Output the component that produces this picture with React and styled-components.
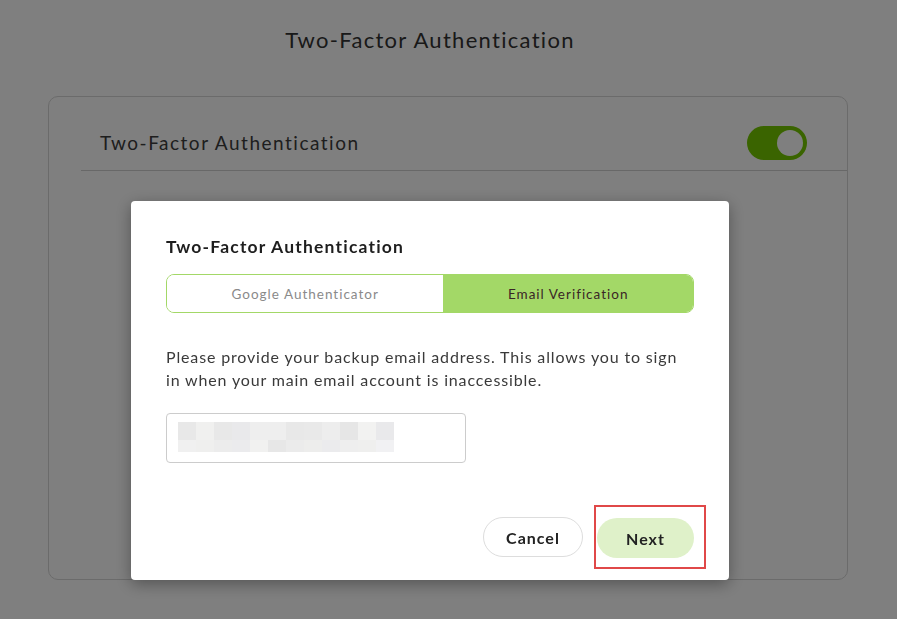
import styled, { createGlobalStyle } from "styled-components";

const GlobalStyle = createGlobalStyle`
  html, body {
    margin: 0;
    padding: 0;
    background: #ffffff;
    font-family: Lato, "Noto Sans", sans-serif;
    color: #333333;
  }
  * { box-sizing: border-box; }
`;

const pixels = [
  ["#e8e8e8", "#f0f0ef", "#e8e8e8", "#e9e9eb", "#eeeeee", "#eeeeee", "#e8e8e8", "#e9e9e9", "#ededed", "#e6e6e6", "#f2f2f1", "#e9e9eb"],
  ["#f0f0f0", "#efefee", "#ececec", "#ebebed", "#f1f1f0", "#e7e7e7", "#ebebeb", "#ededec", "#ebebed", "#eeeeee", "#efefee", "#f1f1f3"],
];

const App = () => {
  return (
    <>
      <GlobalStyle />
      <Page>
        <PageTitle>Two-Factor Authentication</PageTitle>
        <Card>
          <CardRow>
            <RowLabel>Two-Factor Authentication</RowLabel>
            <Toggle>
              <Knob />
            </Toggle>
          </CardRow>
        </Card>
      </Page>
      <Overlay>
        <Modal>
          <ModalTitle>Two-Factor Authentication</ModalTitle>
          <Tabs>
            <Tab>Google Authenticator</Tab>
            <Tab $active>Email Verification</Tab>
          </Tabs>
          <Description>
            Please provide your backup email address. This allows you to sign
            in when your main email account is inaccessible.
          </Description>
          <EmailField>
            <Redacted>
              {pixels.map((row, r) =>
                row.map((c, i) => <Pixel key={r + "-" + i} $shade={c} />)
              )}
            </Redacted>
          </EmailField>
          <Actions>
            <CancelButton>Cancel</CancelButton>
            <Highlight>
              <NextButton>Next</NextButton>
            </Highlight>
          </Actions>
        </Modal>
      </Overlay>
    </>
  );
};
export default App;

const Page = styled.div`
  width: 897px;
  height: 619px;
  padding: 28px 49px 0 48px;
  display: flex;
  flex-direction: column;
  align-items: stretch;
`;
const PageTitle = styled.h1`
  margin: 0 0 44px 0;
  padding-right: 36px;
  text-align: center;
  font-size: 22px;
  line-height: 24px;
  letter-spacing: 1.3px;
  font-weight: 400;
  color: #333333;
`;
const Card = styled.div`
  height: 484px;
  border: 1px solid #d6d6d6;
  border-radius: 10px;
  padding: 26px 0 0 32px;
`;
const CardRow = styled.div`
  display: flex;
  align-items: center;
  justify-content: space-between;
  padding: 2px 40px 10px 19px;
  border-bottom: 1px solid #d0d0d0;
  height: 48px;
`;
const RowLabel = styled.span`
  font-size: 19px;
  letter-spacing: 1.5px;
  color: #3c3c3c;
`;
const Toggle = styled.div`
  width: 60px;
  height: 34px;
  border-radius: 17px;
  background: #74c800;
  display: flex;
  align-items: center;
  justify-content: flex-end;
  padding-right: 4px;
`;
const Knob = styled.div`
  width: 26px;
  height: 26px;
  border-radius: 50%;
  background: #ffffff;
`;
const Overlay = styled.div`
  position: fixed;
  inset: 0;
  background: rgba(0, 0, 0, 0.5);
  display: flex;
  align-items: flex-start;
  padding: 201px 0 0 131px;
`;
const Modal = styled.div`
  width: 598px;
  height: 379px;
  background: #ffffff;
  border-radius: 4px;
  box-shadow: 0 4px 16px rgba(0, 0, 0, 0.35);
  padding: 35px 35px 11px 35px;
  display: flex;
  flex-direction: column;
`;
const ModalTitle = styled.h2`
  margin: 0;
  font-size: 17.5px;
  line-height: 22px;
  letter-spacing: 1.2px;
  font-weight: 700;
  color: #1e1e1e;
`;
const Tabs = styled.div`
  margin-top: 16px;
  display: flex;
  height: 39px;
  border: 1px solid #a3d867;
  border-radius: 8px;
  overflow: hidden;
`;
const Tab = styled.div`
  flex: 1 1 auto;
  padding: 0 20px;
  display: flex;
  align-items: center;
  justify-content: center;
  font-size: 13.5px;
  letter-spacing: 1px;
  background: ${(p) => (p.$active ? "#a3d867" : "#ffffff")};
  color: ${(p) => (p.$active ? "#3a2626" : "#8a8a8a")};
`;
const Description = styled.p`
  margin: 32px 0 0 0;
  padding-right: 6px;
  font-size: 16px;
  line-height: 23px;
  letter-spacing: 0.85px;
  color: #3a3a3a;
`;
const EmailField = styled.div`
  margin-top: 22px;
  width: 300px;
  height: 50px;
  border: 1px solid #cccccc;
  border-radius: 4px;
  padding: 8px 11px;
`;
const Redacted = styled.div`
  display: grid;
  grid-template-columns: repeat(12, 18px);
  grid-template-rows: 18px 12px;
`;
const Pixel = styled.span`
  background: ${(p) => p.$shade};
`;
const Actions = styled.div`
  margin-top: auto;
  display: flex;
  justify-content: flex-end;
  align-items: center;
  gap: 11px;
`;
const ButtonBase = styled.button`
  height: 40px;
  border-radius: 20px;
  font-family: Lato, "Noto Sans", sans-serif;
  font-size: 16px;
  letter-spacing: 1px;
  font-weight: 700;
  color: #222222;
  cursor: pointer;
`;
const CancelButton = styled(ButtonBase)`
  width: 100px;
  background: #ffffff;
  border: 1px solid #dddddd;
`;
const Highlight = styled.div`
  border: 2px solid #e04848;
  padding: 11px 10px 9px 1px;
  margin: 0 -12px 0 0;
`;
const NextButton = styled(ButtonBase)`
  width: 97px;
  background: #dff1c9;
  border: none;
  display: block;
`;
